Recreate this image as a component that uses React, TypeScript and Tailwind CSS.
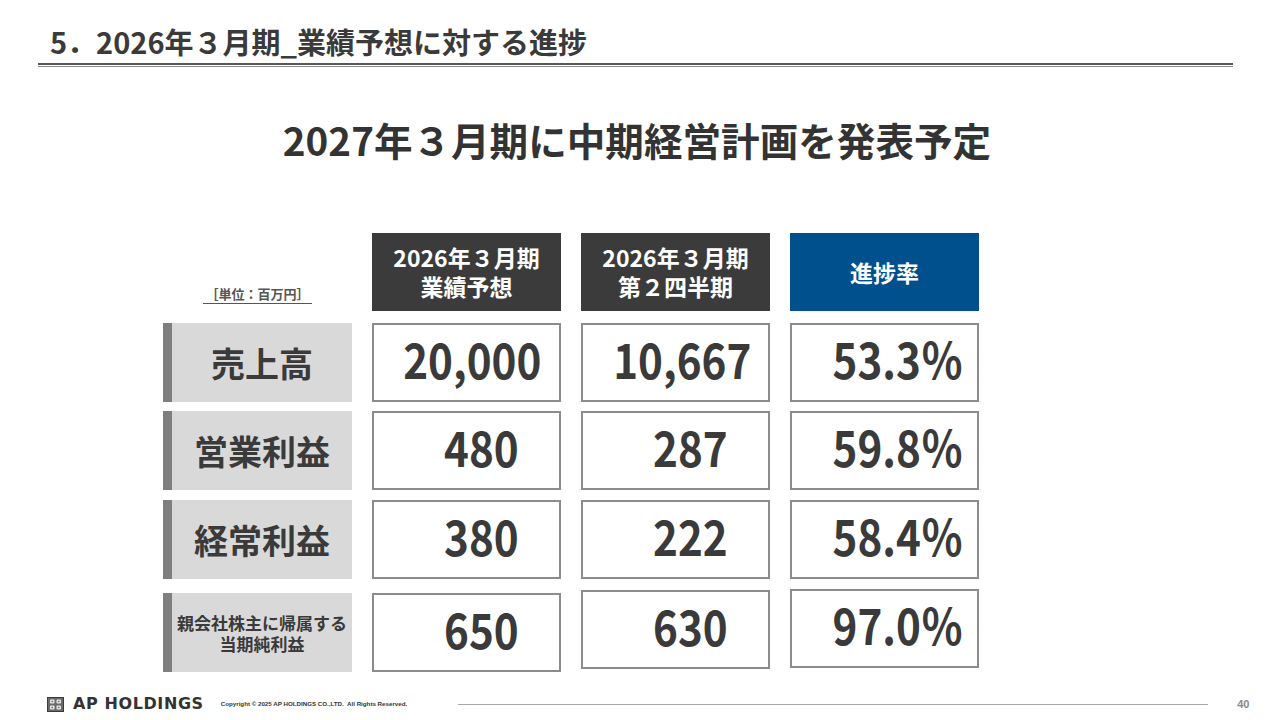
const FONT = "font-['Noto_Sans_CJK_JP','Noto_Sans',sans-serif]";

type Row = {
  label: React.ReactNode;
  small?: boolean;
  gap: string;
  values: { text: string; pad: string; shift?: string }[];
};

const rows: Row[] = [
  {
    label: "売上高",
    gap: "mt-[12px]",
    values: [
      { text: "20,000", pad: "pl-[12px]" },
      { text: "10,667", pad: "pl-[13px]" },
      { text: "53.3％", pad: "pl-[26px]" },
    ],
  },
  {
    label: "営業利益",
    gap: "mt-[9px]",
    values: [
      { text: "480", pad: "pl-[29px]" },
      { text: "287", pad: "pl-[29px]" },
      { text: "59.8％", pad: "pl-[26px]" },
    ],
  },
  {
    label: "経常利益",
    gap: "mt-[10px]",
    values: [
      { text: "380", pad: "pl-[29px]" },
      { text: "222", pad: "pl-[29px]" },
      { text: "58.4％", pad: "pl-[26px]" },
    ],
  },
  {
    label: (
      <>
        <span className="block">親会社株主に帰属する</span>
        <span className="block">当期純利益</span>
      </>
    ),
    small: true,
    gap: "mt-[14px]",
    values: [
      { text: "650", pad: "pl-[29px]" },
      { text: "630", pad: "pl-[29px]", shift: "-mt-[3px]" },
      { text: "97.0％", pad: "pl-[26px]", shift: "-mt-[4px]" },
    ],
  },
];

const Logo = () => (
  <svg width="17" height="15" viewBox="0 0 17 15">
    <rect x="0.5" y="0.5" width="16" height="14" fill="#6b6b6b" stroke="#3a3a3a" />
    <rect x="3" y="2.5" width="4.5" height="4" rx="1" fill="#e6e6e6" />
    <rect x="9.5" y="2.5" width="4.5" height="4" rx="1" fill="#e6e6e6" />
    <rect x="3" y="8.5" width="4.5" height="4" rx="1" fill="#e6e6e6" />
    <rect x="9.5" y="8.5" width="4.5" height="4" rx="1" fill="#e6e6e6" />
    <rect x="4.5" y="3.8" width="1.5" height="1.4" fill="#6b6b6b" />
    <rect x="11" y="3.8" width="1.5" height="1.4" fill="#6b6b6b" />
    <rect x="4.5" y="9.8" width="1.5" height="1.4" fill="#6b6b6b" />
    <rect x="11" y="9.8" width="1.5" height="1.4" fill="#6b6b6b" />
  </svg>
);

const headCell = "w-[189px] h-[78px] text-white text-[23px] leading-[29px] font-bold flex flex-col items-center justify-center";

export default function App() {
  return (
    <div className={`w-[1280px] h-[720px] bg-white flex flex-col overflow-hidden text-[#3a3a3a] ${FONT}`}>
      {/* Title */}
      <div className="h-[63px] pl-[50px] pt-[25px] text-[29px] leading-[33px] font-bold">
        5．2026年３月期_業績予想に対する進捗
      </div>
      <div className="ml-[38px] w-[1195px] h-[2px] bg-[#595959]" />
      <div className="ml-[38px] w-[1195px] h-[1px] mt-[1px] bg-[#8c8c8c]" />

      {/* Headline */}
      <div className="mt-[50px] h-[44px] text-center text-[38.6px] leading-[44px] font-bold text-[#333333] pr-[6px]">
        2027年３月期に中期経営計画を発表予定
      </div>

      {/* Table */}
      <div className="mt-[72px] ml-[163px] flex flex-col">
        <div className="flex gap-[20px]">
          <div className="w-[189px] h-[78px] flex items-end justify-center pb-[7px]">
            <span className="text-[13px] leading-[18px] font-bold text-[#555] border-b border-[#555] px-[2px]">
              ［単位：百万円］
            </span>
          </div>
          <div className={`${headCell} bg-[#3b3b3b]`}>
            <span>2026年３月期</span>
            <span>業績予想</span>
          </div>
          <div className={`${headCell} bg-[#3b3b3b]`}>
            <span>2026年３月期</span>
            <span>第２四半期</span>
          </div>
          <div className={`${headCell} bg-[#00508e]`}>
            <span>進捗率</span>
          </div>
        </div>

        {rows.map((r, i) => (
          <div key={i} className={`flex items-start gap-[20px] ${r.gap}`}>
            <div
              className={`w-[189px] h-[79px] bg-[#d9d9d9] border-l-[9px] border-[#7f7f7f] flex flex-col items-center justify-center text-center font-bold ${
                r.small ? "text-[17px] leading-[21px]" : "text-[34px] leading-none"
              }`}
            >
              {r.label}
            </div>
            {r.values.map((v, j) => (
              <div
                key={j}
                className={`w-[189px] h-[79px] bg-white border-2 border-[#8c8c8c] flex items-center justify-center pb-[10px] ${v.pad} ${v.shift ?? ""}`}
              >
                <span className="text-[49px] leading-none font-bold scale-x-[0.86]">{v.text}</span>
              </div>
            ))}
          </div>
        ))}
      </div>

      {/* Footer */}
      <div className="mt-auto h-[30px] flex items-center pl-[47px] pb-[2px]">
        <Logo />
        <span className="ml-[9px] font-['DejaVu_Sans',sans-serif] font-bold text-[16px] leading-none tracking-[0.6px] text-[#333]">
          AP HOLDINGS
        </span>
        <span className="ml-[17px] font-['Liberation_Sans',sans-serif] font-bold text-[6.2px] leading-none text-[#333] whitespace-pre">
          Copyright © 2025 AP HOLDINGS CO.,LTD.  All Rights Reserved.
        </span>
        <div className="ml-[51px] w-[750px] h-[1px] bg-[#aaaaaa]" />
        <span className="ml-[29px] font-['Liberation_Sans',sans-serif] font-bold text-[11px] leading-none text-[#888]">
          40
        </span>
      </div>
    </div>
  );
}
